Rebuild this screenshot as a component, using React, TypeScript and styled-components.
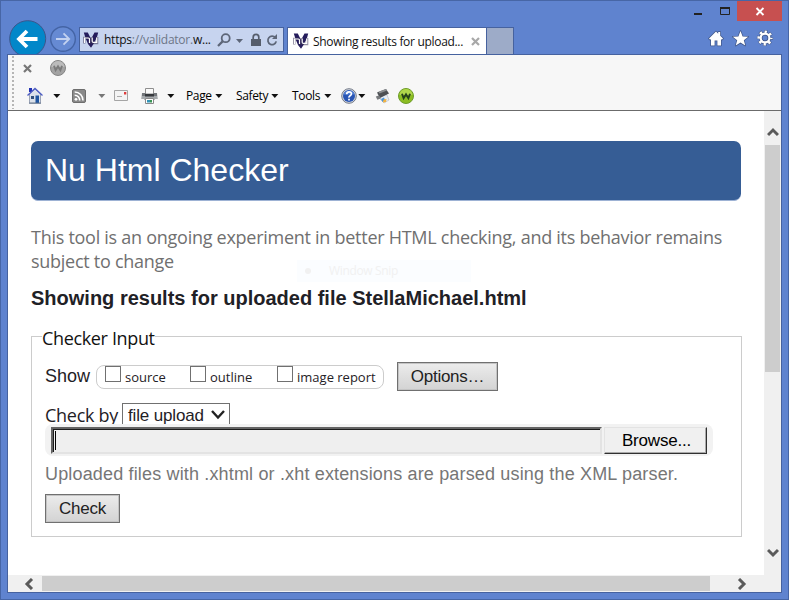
import React from 'react';
import styled, { createGlobalStyle } from 'styled-components';

const ui = '"Open Sans", "Noto Sans", sans-serif';
const sans = '"Liberation Sans", Arial, sans-serif';

const Global = createGlobalStyle`
  * { box-sizing: border-box; }
  body { margin: 0; overflow: hidden; }
  svg { display: block; flex: none; }
`;

const Window = styled.div`
  width: 789px;
  height: 600px;
  display: flex;
  flex-direction: column;
  background: #5f83cf;
  border: 1px solid #4766a6;
`;
const TitleBar = styled.div`
  height: 20px;
  flex: none;
  display: flex;
  justify-content: flex-end;
  padding-right: 6px;
`;
const CloseButton = styled.div`
  width: 45px;
  height: 20px;
  background: #c75050;
`;
const NavRow = styled.div`
  height: 33px;
  flex: none;
  display: flex;
  align-items: flex-start;
  padding-left: 7px;
`;
const NavButtons = styled.div`
  width: 71px;
  height: 33px;
  margin-top: -3px;
`;
const AddressBar = styled.div`
  width: 205px;
  height: 25px;
  margin-top: 6px;
  display: flex;
  align-items: center;
  background: #c7d4ef;
  border: 1px solid #46629f;
  padding-left: 3px;
`;
const Url = styled.span`
  width: 113px;
  margin-left: 5px;
  font: 12px/22px ${ui};
  letter-spacing: -0.24px;
  color: #111;
  white-space: nowrap;
  i { font-style: normal; color: #6d7687; }
`;
const Tab = styled.div`
  width: 200px;
  height: 27px;
  margin: 6px 0 0 3px;
  display: flex;
  align-items: center;
  background: #fff;
  border: 1px solid #46629f;
  border-bottom: 0;
  padding-left: 5px;
`;
const TabTitle = styled.span`
  width: 158px;
  margin-left: 4px;
  font: 12px/24px ${ui};
  letter-spacing: -0.31px;
  color: #111;
  white-space: nowrap;
  padding-top: 2px;
`;
const NewTab = styled.div`
  width: 27px;
  height: 27px;
  margin-top: 6px;
  background: #9dabc8;
  border: 1px solid #46629f;
  border-width: 1px 1px 0 0;
`;
const BrowserTools = styled.div`
  margin: 9px 14px 0 auto;
  display: flex;
`;
const Client = styled.div`
  position: relative;
  width: 775px;
  height: 539px;
  margin-left: 6px;
  display: flex;
  flex-direction: column;
  border: 1px solid #46629f;
  background: #fff;
`;
const CommandBars = styled.div`
  height: 56px;
  flex: none;
  display: flex;
  background: #f7f7f7;
  border-bottom: 1px solid #6b6b6b;
`;
const Bars = styled.div`
  display: flex;
  flex-direction: column;
`;
const Bar = styled.div<{ $h: number }>`
  height: ${(p) => p.$h}px;
  display: flex;
  align-items: center;
`;
const Menu = styled.div<{ $w: number }>`
  width: ${(p) => p.$w}px;
  display: flex;
  align-items: center;
  justify-content: space-between;
  font: 12px/20px ${ui};
  letter-spacing: -0.35px;
  color: #000;
`;
const Spacer = styled.div<{ $w: number }>`
  width: ${(p) => p.$w}px;
  flex: none;
`;
const View = styled.div`
  display: flex;
  height: 464px;
`;
const Page = styled.main`
  position: relative;
  width: 756px;
  padding: 30px 0 0 23px;
  color: #1f2126;
`;
const VScroll = styled.div`
  width: 17px;
  display: flex;
  flex-direction: column;
  align-items: center;
  background: #f0f0f0;
`;
const VArrow = styled.div`
  height: 34px;
  flex: none;
  padding-top: 15px;
`;
const VThumb = styled.div`
  width: 15px;
  height: 227px;
  flex: none;
  margin-bottom: 175px;
  background: #cdcdcd;
`;
const HScroll = styled.div`
  height: 17px;
  display: flex;
  align-items: center;
  background: #f0f0f0;
`;
const HArrow = styled.div`
  width: 34px;
  padding-left: 15px;
`;
const HThumb = styled.div`
  width: 668px;
  height: 15px;
  background: #cdcdcd;
`;
const Banner = styled.h1`
  width: 710px;
  height: 60px;
  margin: 0;
  padding-left: 14px;
  border-radius: 7px;
  border-bottom: 1px solid #9db2d4;
  background: #365d95;
  color: #fff;
  font: 32px/58px ${sans};
`;
const Intro = styled.p`
  margin: 24px 0 13px;
  font: 18px/24px ${ui};
  letter-spacing: -0.27px;
  color: #707070;
  white-space: nowrap;
`;
const Result = styled.h2`
  margin: 0 0 16px;
  font: bold 20px/24px ${sans};
`;
const Form = styled.fieldset`
  width: 711px;
  height: 211px;
  margin: 0;
  padding: 0 0 0 13px;
  border: 1px solid #ccc;
`;
const Legend = styled.legend`
  margin-left: -3px;
  padding: 3px 0 0;
  font: 18px/18px ${ui};
  letter-spacing: -0.35px;
  color: #111;
`;
const ShowRow = styled.div`
  display: flex;
  align-items: center;
  height: 29px;
  margin-top: 15px;
  font: 18px/29px ${sans};
`;
const ShowGroup = styled.div`
  width: 288px;
  height: 24px;
  margin: 0 13px 0 6px;
  padding-left: 8px;
  display: flex;
  border: 1px solid #ccc;
  border-radius: 8px;
`;
const Option = styled.label<{ $w: number }>`
  width: ${(p) => p.$w}px;
  display: flex;
  gap: 4px;
  font: 13px/23px ${ui};
  white-space: nowrap;
`;
const CheckBox = styled.span`
  width: 16px;
  height: 16px;
  border: 1px solid #707070;
  background: #fff;
`;
const Button = styled.button<{ $w: number }>`
  width: ${(p) => p.$w}px;
  height: 29px;
  padding: 0;
  display: block;
  border: 1px solid #707070;
  box-shadow: inset 0 0 0 1px #c4c4c4;
  background: linear-gradient(#ececec, #d3d3d3);
  font: 17px/27px ${sans};
  letter-spacing: -0.25px;
  color: #222;
`;
const CheckRow = styled.div`
  height: 21px;
  margin-top: 12px;
  display: flex;
  font: 18px/24px ${ui};
  letter-spacing: -0.27px;
  white-space: nowrap;
`;
const CheckLabel = styled.span`
  width: 77px;
`;
const Select = styled.div`
  width: 108px;
  height: 21px;
  display: flex;
  justify-content: space-between;
  padding: 0 4px 0 5px;
  border: 1px solid #707070;
  border-bottom: 0;
  font: 17px/23px ${sans};
  letter-spacing: -0.15px;
`;
const FileBox = styled.div`
  position: relative;
  width: 668px;
  height: 32px;
  padding: 3px 6px 2px;
  display: flex;
  gap: 2px;
  border-radius: 8px;
  background: #f2f2f2;
`;
const FileInput = styled.div`
  width: 551px;
  height: 27px;
  border: 2px solid;
  border-color: #646464 #e3e3e3 #e3e3e3 #646464;
  background: #efefef;
  box-shadow: inset 1px 1px 0 #1c1c1c;
  padding: 2px 0 0 2px;
`;
const Caret = styled.div`
  width: 1px;
  height: 19px;
  background: #000;
`;
const Browse = styled.button`
  width: 103px;
  height: 27px;
  padding: 0 0 0 2px;
  border: 1px solid;
  border-color: #e3e3e3 #303030 #303030 #e3e3e3;
  box-shadow: inset -1px -1px 0 #aaa;
  background: #f0f0f0;
  font: 17px/25px ${sans};
  letter-spacing: -0.2px;
  color: #000;
`;
const Help = styled.p`
  margin: 8px 0 10px;
  font: 18px/20px ${sans};
  letter-spacing: 0.16px;
  color: #767676;
  white-space: nowrap;
`;
const Ghost = styled.div`
  position: absolute;
  left: 289px;
  top: 149px;
  width: 174px;
  height: 22px;
  display: flex;
  align-items: center;
  gap: 18px;
  padding-left: 8px;
  background: #fbfdff;
  font: 12px/22px ${ui};
  letter-spacing: -0.35px;
  color: #f1f1f1;
`;
const GhostDot = styled.span`
  width: 6px;
  height: 6px;
  border-radius: 50%;
  background: #f1f1f1;
`;

const Arrow = ({ color = '#111' }: { color?: string }) => (
  <svg width="8" height="4" viewBox="0 0 8 4"><path d="M.3 0h7L3.8 4z" fill={color} /></svg>
);
const Favicon = () => (
  <svg width="16" height="16" viewBox="0 0 16 16">
    <path d="M.8.5h4L8 7l3.500-6.500h3.700L14 5l-3.500 7L8 15.800 5 12 2.500 6z" fill="#251c5c" />
    <path d="M1.200 11.500V6h4.600q1 0 1 1.200v4.300M9 5v4.800q0 1.200 1.200 1.200H14V5" fill="none" stroke="#3a3355" strokeOpacity=".55" strokeWidth="2.600" />
    <path d="M1.500 11V6h3.800q1.200 0 1.200 1.200V11M9.200 5.500v3.700q0 1.200 1.200 1.200h3.300V5.500" fill="none" stroke="#fff" strokeWidth="1.200" />
  </svg>
);
const WBadge = ({ on = false }: { on?: boolean }) => (
  <svg width="16" height="16" viewBox="0 0 16 16">
    <circle cx="8" cy="8" r="7.5" fill={on ? '#8cbd22' : '#a3a3a3'} stroke={on ? '#6d9c2c' : '#858585'} />
    <path d="M1.500 7a6.500 6 0 0 1 13 0z" fill={on ? '#b0d64c' : '#bcbcbc'} />
    <path d="M4 5.800l1.600 4.400L8 6.400l2.400 3.800L12 5.800" fill="none" stroke={on ? '#26421b' : '#7b7b7b'} strokeWidth="1.900" />
  </svg>
);
const Chevron = ({ turn }: { turn: number }) => (
  <svg width="12" height="12" viewBox="0 0 12 12">
    <path d="M1 9L6 4l5 5" fill="none" stroke="#5a5a5a" strokeWidth="3" transform={`rotate(${turn} 6 6)`} />
  </svg>
);
const CaptionIcons = () => (
  <svg width="44" height="20" viewBox="692 1 44 20">
    <path d="M693 13h8v2h-8z" fill="#222" />
    <path d="M719.500 7.500h9v7h-9z" fill="none" stroke="#222" />
    <path d="M719 7h10v2h-10z" fill="#222" />
  </svg>
);
const CloseIcon = () => (
  <svg width="45" height="20" viewBox="0 0 45 20">
    <path d="M19.500 7l7 7m0-7l-7 7" stroke="#fff" strokeWidth="1.900" />
  </svg>
);
const BackForward = () => (
  <svg width="71" height="37" viewBox="8 18 71 37">
    <circle cx="27.700" cy="38.700" r="18" fill="#0287c9" stroke="#3b568c" />
    <path d="M37.500 39H19.500M27 31l-8 8 8 8" fill="none" stroke="#fff" strokeWidth="3.800" />
    <circle cx="63" cy="39" r="12.300" fill="#668ad3" stroke="#4464a5" strokeWidth="1.400" />
    <path d="M56 39h12.500M63.500 33.300l5.700 5.700-5.700 5.700" fill="none" stroke="#c3d2f0" strokeWidth="1.800" />
  </svg>
);
const AddressIcons = () => (
  <svg width="62" height="18" viewBox="217 30 62 18">
    <circle cx="225.700" cy="37.200" r="4" fill="none" stroke="#5d6678" strokeWidth="1.800" />
    <path d="M222.600 40.400L218 45" stroke="#5d6678" strokeWidth="2.200" />
    <path d="M236 38h7l-3.500 4z" fill="#5d6678" />
    <path d="M251 38h10v7h-10z" fill="#565d6b" />
    <path d="M253.200 38v-1.800a2.800 2.800 0 0 1 5.600 0V38" fill="none" stroke="#565d6b" strokeWidth="1.700" />
    <path d="M275.400 36.800a4.200 4.200 0 1 0 .8 3.600" fill="none" stroke="#5d6678" strokeWidth="1.800" />
    <path d="M277 33v5h-5z" fill="#5d6678" />
  </svg>
);
const ToolIcons = () => (
  <svg width="66" height="18" viewBox="708 30 66 18">
    <g stroke="#40578a" strokeWidth="1.500" strokeLinejoin="round" fill="#fff" paintOrder="stroke">
      <path d="M716 31.500l2.200 2.200V32h2v3.700l2.800 2.900-1.200 1.200-.8-.8v6.500h-3.600v-5h-2.800v5H711V39l-.8.8-1.200-1.200z" />
      <path d="M740.500 31l2.100 5.400 5.600.3-4.400 3.500 1.500 5.400-4.800-3.100-4.800 3.100 1.500-5.400-4.400-3.500 5.600-.3z" />
    </g>
    <g fill="none">
      <circle cx="765" cy="38" r="6.500" stroke="#40578a" strokeWidth="3.200" strokeDasharray="3.200 1.905" strokeDashoffset="1.600" />
      <circle cx="765" cy="38" r="4.400" stroke="#40578a" strokeWidth="3.800" />
      <circle cx="765" cy="38" r="6.300" stroke="#fff" strokeWidth="2.600" strokeDasharray="2.300 2.648" strokeDashoffset="1.150" />
      <circle cx="765" cy="38" r="4.400" stroke="#fff" strokeWidth="2.200" />
    </g>
  </svg>
);
const Grip = () => (
  <svg width="7" height="55" viewBox="0 0 7 55">
    <path d="M5 1v53" stroke="#b5b5b5" strokeWidth="2" strokeDasharray="2 2" />
  </svg>
);
const Cross = ({ color }: { color: string }) => (
  <svg width="9" height="9" viewBox="0 0 9 9"><path d="M1 1l7 7m0-7L1 8" stroke={color} strokeWidth="2.200" /></svg>
);
const House = () => (
  <svg width="16" height="17" viewBox="0 0 16 17">
    <path d="M2.500 7L8 2l5.500 5v9h-11z" fill="#dbe1ea" stroke="#8792a8" strokeWidth=".8" />
    <path d="M2 1h3v4H2z" fill="#2232b5" />
    <path d="M.5 8.500L8 1.500l7.500 7" fill="none" stroke="#4d5cc4" strokeWidth="1.300" />
    <path d="M4 9h3v3H4z" fill="#31507c" />
    <path d="M8.500 8.500H12V16H8.500z" fill="#1f55a0" />
    <path d="M2 16.200h12" stroke="#65748c" />
  </svg>
);
const Feed = () => (
  <svg width="14" height="14" viewBox="0 0 14 14">
    <rect x=".5" y=".5" width="13" height="13" rx="1.500" fill="#8a8a8a" stroke="#6e6e6e" />
    <circle cx="4" cy="10.300" r="1.400" fill="#fff" />
    <path d="M2.700 6.200a5 5 0 0 1 5 5.300M2.700 3a8.300 8.300 0 0 1 8.300 8.500" fill="none" stroke="#fff" strokeWidth="1.600" />
  </svg>
);
const Mail = () => (
  <svg width="14" height="11" viewBox="0 0 14 11">
    <path d="M.5.5h13v10H.5z" fill="#f4f4f4" stroke="#a5a5a5" />
    <path d="M10 2h2.300v2.500H10z" fill="#df3c3c" />
    <path d="M3 6.500h5" stroke="#aaa" />
  </svg>
);
const Printer = () => (
  <svg width="17" height="16" viewBox="0 0 17 16">
    <path d="M4.500.5h8V6h-8z" fill="#fafafa" stroke="#8f8f8f" />
    <path d="M1 5h3.500v2h8V5H16l.5 6H14l-1 1H4l-1-1H.5z" fill="#72767a" />
    <path d="M1 8h15v3H1z" fill="#a6aaad" />
    <path d="M4 6h9v2.500H4z" fill="#36393d" />
    <path d="M4.500 10.500h8v5h-8z" fill="#fff" stroke="#8a8a8a" />
    <path d="M6 12h3v2.500H6z" fill="#3294b7" /><path d="M9 12h2v2.500H9z" fill="#3a9555" />
  </svg>
);
const HelpIcon = () => (
  <svg width="16" height="16" viewBox="0 0 16 16">
    <circle cx="8" cy="8" r="7.300" fill="#d5d9e0" stroke="#737a88" />
    <circle cx="8" cy="8" r="6" fill="#2855b4" />
    <path d="M2.500 6.500a5.600 4.700 0 0 1 11 0z" fill="#5482d6" />
    <path d="M5.700 6.300q0-2.500 2.400-2.500t2.300 2q0 1.200-1.300 1.900T8 9.600M8 10.800v1.800" fill="none" stroke="#fff" strokeWidth="1.700" />
  </svg>
);
const Pen = () => (
  <svg width="15" height="16" viewBox="0 0 15 16">
    <path d="M3 6l9 1 2 5-5 3-4-4z" fill="#e9eef5" stroke="#b6bfc9" strokeWidth=".7" />
    <path d="M2 4.500L11 1l3 4.500L5 10z" fill="#4d5054" />
    <path d="M3.500 3.800L11 1l1 1.500-7.500 3z" fill="#8b8e91" />
    <path d="M.8 8.500l3-1 2 3-3.500 1.200z" fill="#77797c" />
    <path d="M6 11l3-1.500 1 2.500-2.500 2z" fill="#4a94d8" /><path d="M8.500 11.500l3-.5-.5 3-3 .5z" fill="#f2b342" />
  </svg>
);

export default function App() {
  return (
    <Window>
      <Global />
      <TitleBar>
        <CaptionIcons />
        <CloseButton><CloseIcon /></CloseButton>
      </TitleBar>
      <NavRow>
        <NavButtons><BackForward /></NavButtons>
        <AddressBar>
          <Favicon />
          <Url>https<i>://validator.</i>w...</Url>
          <AddressIcons />
        </AddressBar>
        <Tab>
          <Favicon />
          <TabTitle>Showing results for upload...</TabTitle>
          <Cross color="#a8a8a8" />
        </Tab>
        <NewTab />
        <BrowserTools><ToolIcons /></BrowserTools>
      </NavRow>
      <Client>
        <CommandBars>
          <Grip />
          <Bars>
            <Bar $h={26}>
              <Spacer $w={8} /><Cross color="#777" />
              <Spacer $w={18} /><WBadge />
            </Bar>
            <Bar $h={29}>
              <Spacer $w={12} /><House />
              <Spacer $w={10} /><Arrow />
              <Spacer $w={11} /><Feed />
              <Spacer $w={12} /><Arrow color="#777" />
              <Spacer $w={8} /><Mail />
              <Spacer $w={13} /><Printer />
              <Spacer $w={9} /><Arrow />
              <Spacer $w={11} /><Menu $w={37}>Page<Arrow /></Menu>
              <Spacer $w={13} /><Menu $w={43}>Safety<Arrow /></Menu>
              <Spacer $w={13} /><Menu $w={40}>Tools<Arrow /></Menu>
              <Spacer $w={9} /><HelpIcon />
              <Spacer $w={1} /><Arrow />
              <Spacer $w={9} /><Pen />
              <Spacer $w={8} /><WBadge on />
            </Bar>
          </Bars>
        </CommandBars>
        <View>
          <Page>
            <Banner>Nu Html Checker</Banner>
            <Intro>
              This tool is an ongoing experiment in better HTML checking, and its behavior remains<br />
              subject to change
            </Intro>
            <Result>Showing results for uploaded file StellaMichael.html</Result>
            <Form>
              <Legend>Checker Input</Legend>
              <ShowRow>
                Show
                <ShowGroup>
                  <Option $w={85}><CheckBox />source</Option>
                  <Option $w={87}><CheckBox />outline</Option>
                  <Option $w={100}><CheckBox />image report</Option>
                </ShowGroup>
                <Button $w={101}>Options…</Button>
              </ShowRow>
              <CheckRow>
                <CheckLabel>Check by</CheckLabel>
                <Select>
                  file upload
                  <svg width="14" height="20" viewBox="0 0 14 20"><path d="M1 7l6 6.500L13 7" fill="none" stroke="#222" strokeWidth="2.400" /></svg>
                </Select>
              </CheckRow>
              <FileBox>
                <FileInput><Caret /></FileInput>
                <Browse>Browse...</Browse>
              </FileBox>
              <Help>Uploaded files with .xhtml or .xht extensions are parsed using the XML parser.</Help>
              <Button $w={75}>Check</Button>
            </Form>
            <Ghost><GhostDot />Window Snip</Ghost>
          </Page>
          <VScroll>
            <VArrow><Chevron turn={0} /></VArrow>
            <VThumb />
            <Chevron turn={180} />
          </VScroll>
        </View>
        <HScroll>
          <HArrow><Chevron turn={-90} /></HArrow>
          <HThumb />
          <Spacer $w={26} />
          <Chevron turn={90} />
        </HScroll>
      </Client>
    </Window>
  );
}
